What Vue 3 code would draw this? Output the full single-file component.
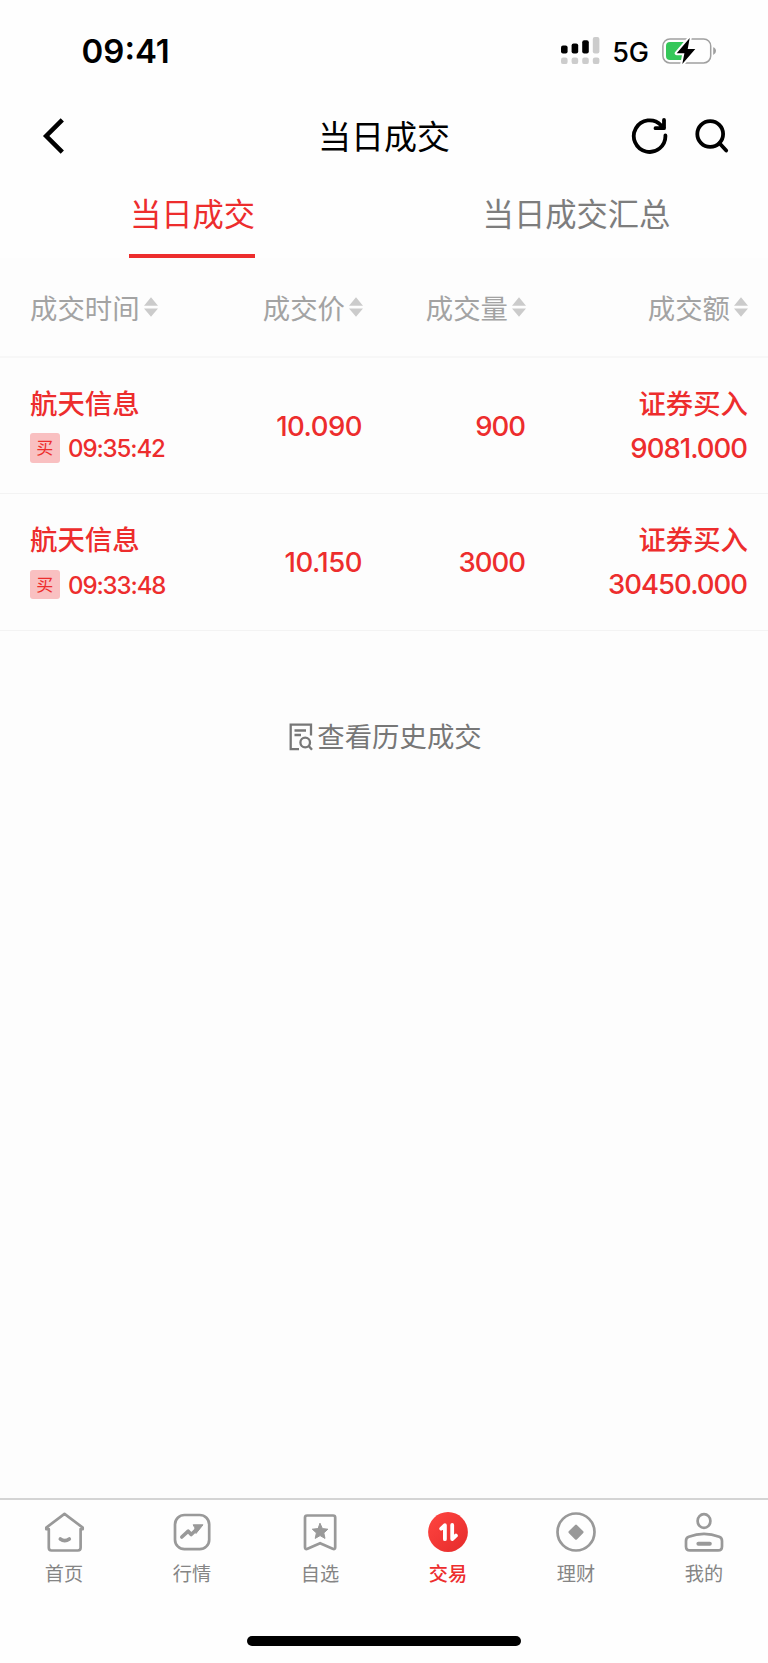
<template>
  <div class="page">

    <!-- ===== Barra de estado ===== -->
    <div class="status-bar">
      <span class="clock">09:41</span>
      <div class="status-right">
        <svg class="signal" viewBox="0 0 39 28">
          <rect x="0" y="8.5" width="6.6" height="8" rx="2" />
          <rect x="10.6" y="6.5" width="6.6" height="10" rx="2" />
          <rect x="21.2" y="3.2" width="6.6" height="13.3" rx="2" />
          <rect class="off" x="31.8" y="0" width="6.6" height="16.5" rx="2" />
          <rect v-for="x in [0, 10.6, 21.2, 31.8]" :key="x" class="off" :x="x" y="20.5" width="6.6" height="6.6" rx="2.2" />
        </svg>
        <span class="network">5G</span>
        <svg class="battery" viewBox="0 0 54 28">
          <rect x="0.9" y="1.9" width="47.8" height="24" rx="7" fill="none" stroke="#a0a0a0" stroke-width="1.5" />
          <path d="M51.2 10.2q2.8 1 2.8 3.9t-2.8 3.9z" fill="#a0a0a0" />
          <path d="M8 5h15v18H8q-4 0-4-4V9q0-4 4-4z" fill="#34c759" />
          <path d="M27.7 1L14.7 16.3H22.4L20.3 27L33.3 12H25.7z" fill="#000" stroke="#fff" stroke-width="4" paint-order="stroke" stroke-linejoin="round" />
        </svg>
      </div>
    </div>

    <!-- ===== Cabecera ===== -->
    <header class="header">
      <svg class="back" viewBox="0 0 24 38">
        <path d="M21.3 2.8L5.2 19L21.3 35.2" />
      </svg>
      <h1>当日成交</h1>
      <div class="actions">
        <svg viewBox="0 0 40 40">
          <path d="M35.4 19.5A15.8 15.8 0 1 1 31 9.2L34 11.8M34 4V12.2H25.5" />
        </svg>
        <svg viewBox="0 0 40 40">
          <circle cx="18.2" cy="18" r="12.9" />
          <path d="M27.5 27.3L34.2 34.5" />
        </svg>
      </div>
    </header>

    <!-- ===== Pestañas ===== -->
    <nav class="tabs">
      <div v-for="(tab, i) in tabs" :key="tab" class="tab" :class="{ active: i === tabActiva }" @click="tabActiva = i">
        <span>{{ tab }}</span>
      </div>
    </nav>

    <!-- ===== Tabla de operaciones ===== -->
    <main class="content">
      <div class="row row-head">
        <div v-for="col in columnas" :key="col" class="cell">
          <span>{{ col }}</span>
          <svg class="sort" viewBox="0 0 14 20">
            <path d="M7 0.3L14 8.8H0zM0 11.6H14L7 19.8z" />
          </svg>
        </div>
      </div>

      <div v-for="op in operaciones" :key="op.hora" class="row row-data">
        <div class="cell stock">
          <span class="name">{{ op.nombre }}</span>
          <div class="time">
            <span class="badge">买</span>
            <span>{{ op.hora }}</span>
          </div>
        </div>
        <div class="cell number price">{{ op.precio }}</div>
        <div class="cell number">{{ op.cantidad }}</div>
        <div class="cell amount">
          <span class="name">{{ op.tipo }}</span>
          <span class="number">{{ op.importe }}</span>
        </div>
      </div>

      <div class="history">
        <svg viewBox="0 0 24 28">
          <path d="M10 26.2H1.7V1.7H22V12.5M5.5 7.5H17M5.5 12H12" />
          <circle cx="16.2" cy="19.5" r="4.8" />
          <path d="M19.7 23L23 26.8" />
        </svg>
        <span>查看历史成交</span>
      </div>
    </main>

    <!-- ===== Menú inferior ===== -->
    <footer class="tabbar">
      <div class="item">
        <svg viewBox="0 0 42 42">
          <path d="M5.8 18.2H3.3V16.6L21.5 2.8L39.7 16.6V18.2H37.7M5.8 18V36.8Q5.8 39.5 8.5 39.5H34.9Q37.6 39.5 37.6 36.8V18" />
          <path d="M17.3 28Q21.7 31.3 26.3 28" stroke-width="3.6" />
        </svg>
        <span>首页</span>
      </div>
      <div class="item">
        <svg viewBox="0 0 42 42">
          <rect x="4" y="4" width="34.2" height="34.2" rx="9.5" />
          <path d="M10.8 26L17.2 20.2L20.2 23.5L27.5 16.5" stroke-width="3.6" />
          <path class="solid" d="M22.5 13.8H32L25 22.5L23.8 17z" stroke-width="1" />
        </svg>
        <span>行情</span>
      </div>
      <div class="item">
        <svg viewBox="0 0 42 42">
          <path d="M8.1 4.5H34.1Q36.2 4.5 36.2 6.6V36.2Q36.2 38.8 33.7 37.7L21.1 32.2L8.5 37.7Q6 38.8 6 36.2V6.6Q6 4.5 8.1 4.5z" />
          <path class="solid" d="M21.1 12.5L23.4 17.6L28.9 18.2L24.8 21.9L26 27.4L21.1 24.6L16.2 27.4L17.4 21.9L13.3 18.2L18.8 17.6z" stroke-width="1" />
        </svg>
        <span>自选</span>
      </div>
      <div class="item active">
        <svg viewBox="0 0 42 42">
          <defs>
            <linearGradient id="rojo" x1="0" y1="0" x2="1" y2="1">
              <stop offset="0" stop-color="#ff4540" />
              <stop offset="1" stop-color="#e52b2b" />
            </linearGradient>
          </defs>
          <circle cx="21" cy="21" r="19.9" fill="url(#rojo)" stroke="none" />
          <path class="arrows" d="M17.9 28.2V14.2L14.2 17.6M25.2 14V28L28.9 24.6" />
        </svg>
        <span>交易</span>
      </div>
      <div class="item">
        <svg viewBox="0 0 42 42">
          <circle cx="21" cy="21" r="18.5" />
          <path class="solid" d="M21 14.8L27.4 21.2L21 27.6L14.6 21.2z" stroke-width="2.4" />
        </svg>
        <span>理财</span>
      </div>
      <div class="item">
        <svg viewBox="0 0 42 42">
          <ellipse cx="21" cy="10" rx="6.4" ry="6.8" />
          <path d="M3 30Q3 26.8 5.8 25.8Q21 20.1 36.2 25.8Q39 26.8 39 30V35.4Q39 39.4 35 39.4H7Q3 39.4 3 35.4z" />
          <path d="M15.4 32.7H26.8" stroke-width="4" />
        </svg>
        <span>我的</span>
      </div>
    </footer>
    <div class="home-indicator"></div>
  </div>
</template>

<script setup>
import { ref } from 'vue'

/* ===== Pestañas ===== */
const tabs = ['当日成交', '当日成交汇总']
const tabActiva = ref(0)

/* ===== Datos de la tabla ===== */
const columnas = ['成交时间', '成交价', '成交量', '成交额']

const operaciones = ref([
  { nombre: '航天信息', hora: '09:35:42', precio: '10.090', cantidad: '900', tipo: '证券买入', importe: '9081.000' },
  { nombre: '航天信息', hora: '09:33:48', precio: '10.150', cantidad: '3000', tipo: '证券买入', importe: '30450.000' }
])
</script>

<style>
body {
  background: #fefefe;
}
</style>

<style scoped>
/* ===== Layout ===== */
.page {
  display: flex;
  flex-direction: column;
  box-sizing: border-box;
  width: 768px;
  height: 1663px;
  padding-bottom: 17px;
  background: #fefefe;
  color: #000;
  font-family: Inter, "Noto Sans CJK SC", sans-serif;
}

svg {
  display: block;
  flex: none;
}

/* ===== Barra de estado ===== */
.status-bar {
  display: flex;
  justify-content: space-between;
  align-items: center;
  height: 102px;
  padding: 0 52px 0 81.5px;
}

.clock {
  font-size: 33px;
  font-weight: 600;
}

.status-right {
  display: flex;
  align-items: center;
}

.signal {
  width: 39px;
  height: 28px;
}

.signal .off {
  fill: #ccc;
}

.network {
  margin: 2px 13px 0 12px;
  font-size: 27px;
  font-weight: 500;
}

.battery {
  width: 54px;
  height: 28px;
}

/* ===== Cabecera ===== */
.header {
  display: grid;
  grid-template-columns: 1fr auto 1fr;
  align-items: center;
  height: 68px;
  padding: 0 36px 0 41px;
}

.header svg {
  fill: none;
  stroke: #000;
  stroke-width: 3.8;
}

.header .back {
  width: 24px;
  height: 38px;
  stroke-width: 4.6;
}

h1 {
  margin: 2px 0 0 -5px;
  font-size: 33px;
  font-weight: 400;
  line-height: 40px;
}

.actions {
  display: flex;
  justify-content: flex-end;
  gap: 22px;
}

.actions svg {
  width: 40px;
  height: 40px;
  stroke-linecap: round;
  stroke-linejoin: round;
}

/* ===== Pestañas ===== */
.tabs {
  display: flex;
  height: 88px;
}

.tab {
  display: flex;
  flex: 1;
  justify-content: center;
  color: #7d7d7d;
  font-size: 31.3px;
  line-height: 91px;
}

.tab span {
  box-sizing: border-box;
  height: 88px;
  padding-left: 1px;
}

.tab.active {
  color: #ed2d2d;
}

.tab.active span {
  border-bottom: 4px solid #ed2d2d;
}

/* ===== Tabla ===== */
.content {
  flex: 1;
  background: #fdfdfd;
}

.row {
  display: grid;
  grid-template-columns: 190px 1fr 163px 222px;
  align-items: center;
  box-sizing: border-box;
  padding: 0 20px 0 30px;
  font-size: 27.4px;
}

.cell {
  display: flex;
  justify-content: flex-end;
  align-items: center;
}

.cell:first-child {
  justify-content: flex-start;
}

.row-head {
  height: 100px;
  border-bottom: 2px solid #f7f7f7;
  color: #a3a3a3;
}

.sort {
  width: 14px;
  height: 20px;
  margin-left: 4px;
  fill: #cbcbcb;
}

.row-data {
  height: 136.4px;
  border-bottom: 1px solid #f3f3f3;
  color: #ed2d2d;
  font-weight: 500;
  font-size: 27.5px;
}

.number {
  padding-right: 1px;
  letter-spacing: -1px;
}

.price {
  letter-spacing: -0.5px;
}

.stock,
.amount {
  flex-direction: column;
  line-height: 44px;
}

.stock {
  align-items: flex-start;
}

.amount {
  align-items: flex-end;
}

.name {
  font-size: 27.4px;
}

.time {
  display: flex;
  align-items: center;
  gap: 8.5px;
  height: 43px;
  padding-top: 1px;
  font-size: 24px;
  font-weight: 450;
  letter-spacing: -1.1px;
}

.badge {
  width: 29.5px;
  height: 29.5px;
  border-radius: 3px;
  background: #f9c0c1;
  font-size: 17px;
  font-weight: 400;
  line-height: 30px;
  letter-spacing: 0;
  text-align: center;
}

.badge + span {
  padding-top: 2px;
  line-height: 42px;
}

.history {
  display: flex;
  justify-content: center;
  align-items: center;
  gap: 4px;
  margin-top: 86px;
  padding-left: 3px;
  color: #777;
  font-size: 27.4px;
  line-height: 40px;
}

.history svg {
  width: 24px;
  height: 28px;
  fill: none;
  stroke: #777;
  stroke-width: 2.3;
}

/* ===== Menú inferior ===== */
.tabbar {
  display: flex;
  box-sizing: border-box;
  height: 138.5px;
  padding-top: 11px;
  border-top: 2px solid #d4d4d4;
}

.item {
  display: flex;
  flex: 1;
  flex-direction: column;
  align-items: center;
  gap: 7px;
  color: #858585;
  font-size: 19.2px;
  line-height: 28px;
}

.item svg {
  width: 42px;
  height: 42px;
  fill: none;
  stroke: #999;
  stroke-width: 2.7;
  stroke-linecap: round;
  stroke-linejoin: round;
}

.item .solid {
  fill: #999;
}

.item .arrows {
  stroke: #fff;
  stroke-width: 3.8;
}

.item.active {
  color: #ed2d2d;
  font-weight: 500;
}

.home-indicator {
  width: 274px;
  height: 10px;
  margin: 0 auto;
  border-radius: 5px;
  background: #000;
}
</style>
